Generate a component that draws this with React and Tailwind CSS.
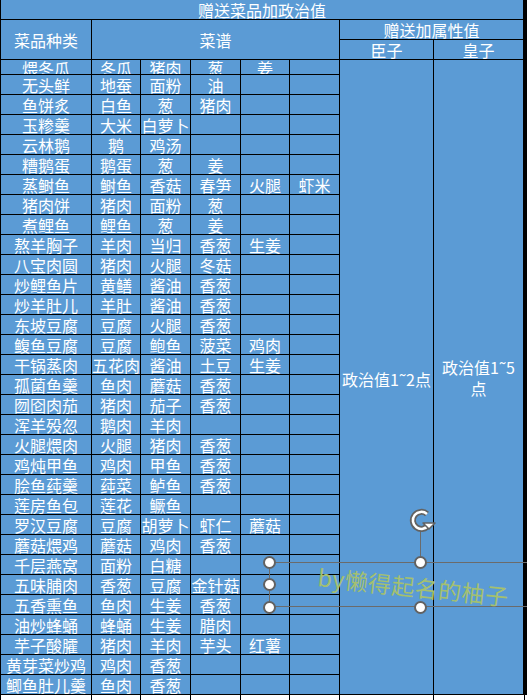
const ROWS = [
  ["煨冬瓜", "冬瓜", "猪肉", "葱", "姜", ""],
  ["无头鲜", "地蚕", "面粉", "油", "", ""],
  ["鱼饼炙", "白鱼", "葱", "猪肉", "", ""],
  ["玉糁羹", "大米", "白萝卜", "", "", ""],
  ["云林鹅", "鹅", "鸡汤", "", "", ""],
  ["糟鹅蛋", "鹅蛋", "葱", "姜", "", ""],
  ["蒸鲥鱼", "鲥鱼", "香菇", "春笋", "火腿", "虾米"],
  ["猪肉饼", "猪肉", "面粉", "葱", "", ""],
  ["煮鲤鱼", "鲤鱼", "葱", "姜", "", ""],
  ["熬羊胸子", "羊肉", "当归", "香葱", "生姜", ""],
  ["八宝肉圆", "猪肉", "火腿", "冬菇", "", ""],
  ["炒鲤鱼片", "黄鳝", "酱油", "香葱", "", ""],
  ["炒羊肚儿", "羊肚", "酱油", "香葱", "", ""],
  ["东坡豆腐", "豆腐", "火腿", "香葱", "", ""],
  ["鳆鱼豆腐", "豆腐", "鲍鱼", "菠菜", "鸡肉", ""],
  ["干锅蒸肉", "五花肉", "酱油", "土豆", "生姜", ""],
  ["孤菌鱼羹", "鱼肉", "蘑菇", "香葱", "", ""],
  ["囫囵肉茄", "猪肉", "茄子", "香葱", "", ""],
  ["浑羊殁忽", "鹅肉", "羊肉", "", "", ""],
  ["火腿煨肉", "火腿", "猪肉", "香葱", "", ""],
  ["鸡炖甲鱼", "鸡肉", "甲鱼", "香葱", "", ""],
  ["脍鱼莼羹", "莼菜", "鲈鱼", "香葱", "", ""],
  ["莲房鱼包", "莲花", "鳜鱼", "", "", ""],
  ["罗汉豆腐", "豆腐", "胡萝卜", "虾仁", "蘑菇", ""],
  ["蘑菇煨鸡", "蘑菇", "鸡肉", "香葱", "", ""],
  ["千层燕窝", "面粉", "白糖", "", "", ""],
  ["五味脯肉", "香葱", "豆腐", "金针菇", "", ""],
  ["五香熏鱼", "鱼肉", "生姜", "香葱", "", ""],
  ["油炒蜂蛹", "蜂蛹", "生姜", "腊肉", "", ""],
  ["芋子酸臛", "猪肉", "羊肉", "芋头", "红薯", ""],
  ["黄芽菜炒鸡", "鸡肉", "香葱", "", "", ""],
  ["鲫鱼肚儿羹", "鱼肉", "香葱", "", "", ""],
];

const cell = "bg-[#5b9bd5] flex items-center justify-center whitespace-nowrap";

function Handle() {
  return <div className="w-[13px] h-[13px] rounded-full bg-white border-[2.5px] border-[#626262]" />;
}

export default function App() {
  return (
    <div className="relative w-[527px] h-[700px] bg-white overflow-hidden text-white text-[16px] font-['Noto_Sans_CJK_SC','Noto_Sans',sans-serif]">
      <div className="grid w-[527px] bg-black gap-px pl-px pr-[4px] pb-px grid-cols-[90px_48px_49px_49px_48px_49px_93px_89px] grid-rows-[19px_19px_19px_14px_repeat(31,19px)]">
        <div className={`${cell} col-span-8`}>赠送菜品加政治值</div>
        <div className={`${cell} row-span-2`}>菜品种类</div>
        <div className={`${cell} col-span-5 row-span-2`}>菜谱</div>
        <div className={`${cell} col-span-2`}>赠送加属性值</div>
        <div className={cell}>臣子</div>
        <div className={cell}>皇子</div>

        {ROWS.map((r, i) => (
          <div key={i} className="contents">
            {r.map((t, j) =>
              i === 0 ? (
                <div key={j} className="bg-[#5b9bd5] overflow-hidden text-center leading-[17px]">
                  {t}
                </div>
              ) : (
                <div key={j} className={cell}>
                  {t}
                </div>
              )
            )}
            {i === 0 && (
              <>
                <div className={`${cell} row-span-32 row-start-4 col-start-7 pt-[4px]`}>政治值1˜2点</div>
                <div className={`${cell} row-span-32 row-start-4 col-start-8 text-center leading-[21px] whitespace-normal pt-[1px]`}>
                  政治值1˜5
                  <br />点
                </div>
              </>
            )}
          </div>
        ))}
      </div>
      <div className="grid w-[527px] h-[6px] grid-cols-[91px_49px_50px_50px_49px_50px_94px_91px_1px]">
        {[...Array(9)].map((_, k) => (
          <div key={k} className="border-l border-black" />
        ))}
      </div>

      {/* watermark text box, selected */}
      <div className="absolute left-[269px] top-[562px] w-[300px] h-[45px] border-t border-b border-l border-[#6b6b6b]" />
      <div className="absolute left-[420px] top-[530px] w-px h-[32px] bg-[#6b6b6b]" />
      <div className="absolute left-[318px] top-[561px] text-[#a4c070] text-[23px] leading-[30px] whitespace-nowrap rotate-[6deg] origin-left font-['Noto_Sans_CJK_SC',sans-serif] tracking-[0.5px]">
        by懒得起名的柚子
      </div>
      <div className="absolute left-[263px] top-[556px]"><Handle /></div>
      <div className="absolute left-[414px] top-[556px]"><Handle /></div>
      <div className="absolute left-[263px] top-[578px]"><Handle /></div>
      <div className="absolute left-[263px] top-[601px]"><Handle /></div>
      <div className="absolute left-[414px] top-[601px]"><Handle /></div>
      <svg className="absolute left-[408px] top-[508px]" width="28" height="26" viewBox="0 0 28 26">
        <path d="M19 6 A8.5 8.5 0 1 0 20.5 17" fill="none" stroke="#626262" strokeWidth="6" />
        <path d="M19 6 A8.5 8.5 0 1 0 20.5 17" fill="none" stroke="#fff" strokeWidth="2.5" />
        <path d="M15 15 L27 15 L21 21 Z" fill="#fff" stroke="#626262" strokeWidth="1.5" strokeLinejoin="round" />
      </svg>
    </div>
  );
}
